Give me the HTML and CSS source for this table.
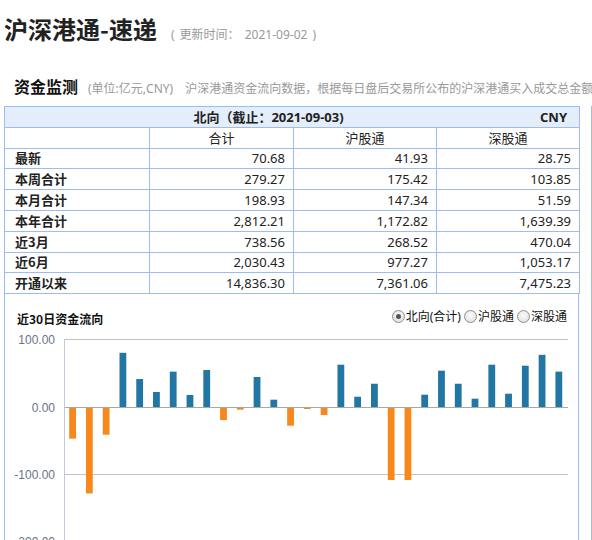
FILE: index.html
```html
<!DOCTYPE html>
<html lang="zh-CN">
<head>
<meta charset="utf-8">
<title>沪深港通-速递</title>
<link rel="stylesheet" href="styles.css">
</head>
<body>
<div class="page">
  <div class="top">
    <h1 class="title">沪深港通-速递</h1>
    <span class="updated">( 更新时间： 2021-09-02 )</span>
  </div>
  <div class="section-head">
    <span class="section-title">资金监测</span>
    <span class="unit">(单位:亿元,CNY)</span>
    <span class="desc">沪深港通资金流向数据，根据每日盘后交易所公布的沪深港通买入成交总金额和卖出成交总金额计算</span>
  </div>
  <div class="main">
    <div class="left">
      <table class="flow">
        <colgroup>
          <col class="c1"><col class="c2"><col class="c3"><col class="c4">
        </colgroup>
        <tr class="r-head">
          <td colspan="4">
            <div class="head-flex">
              <span class="head-title">北向（截止：2021-09-03)</span>
              <span class="head-cny">CNY</span>
            </div>
          </td>
        </tr>
        <tr class="r-cols">
          <td></td><td>合计</td><td>沪股通</td><td>深股通</td>
        </tr>
        <tr><td class="lbl">最新</td><td class="num">70.68</td><td class="num">41.93</td><td class="num">28.75</td></tr>
        <tr><td class="lbl">本周合计</td><td class="num">279.27</td><td class="num">175.42</td><td class="num">103.85</td></tr>
        <tr><td class="lbl">本月合计</td><td class="num">198.93</td><td class="num">147.34</td><td class="num">51.59</td></tr>
        <tr><td class="lbl">本年合计</td><td class="num">2,812.21</td><td class="num">1,172.82</td><td class="num">1,639.39</td></tr>
        <tr><td class="lbl">近3月</td><td class="num">738.56</td><td class="num">268.52</td><td class="num">470.04</td></tr>
        <tr><td class="lbl">近6月</td><td class="num">2,030.43</td><td class="num">977.27</td><td class="num">1,053.17</td></tr>
        <tr><td class="lbl">开通以来</td><td class="num">14,836.30</td><td class="num">7,361.06</td><td class="num">7,475.23</td></tr>
      </table>
      <div class="chart-panel">
        <div class="chart-head">
          <span class="chart-title">近30日资金流向</span>
          <div class="radios">
            <span class="radio checked"></span><span class="rlabel">北向(合计)</span>
            <span class="radio"></span><span class="rlabel">沪股通</span>
            <span class="radio"></span><span class="rlabel">深股通</span>
          </div>
        </div>
        <svg class="chart" width="573" height="215" viewBox="0 0 573 215">
          <g class="ylabels">
            <text x="50" y="14">100.00</text>
            <text x="50" y="82">0.00</text>
            <text x="50" y="149">-100.00</text>
            <text x="50" y="216">-200.00</text>
          </g>
          <line class="axis" x1="59.5" y1="9" x2="59.5" y2="215"/>
          <line class="grid" x1="60" y1="9.5" x2="563" y2="9.5"/>
          <line class="grid" x1="60" y1="144.5" x2="563" y2="144.5"/>
          <line class="grid" x1="60" y1="211.5" x2="563" y2="211.5"/>
          <g id="bars"></g>
          <line class="zero" x1="60" y1="77.5" x2="563" y2="77.5"/>
        </svg>
      </div>
    </div>
    <div class="right"></div>
  </div>
</div>
<script src="chart.js"></script>
</body>
</html>
```

FILE: chart.js
```js
(function () {
  var vals = [-46.6, -128, -40.7, 81, 42, 22.7, 53, 18.3, 55.4, -18.9,
    -3.5, 45, 11.3, -27.3, -2.5, -11.4, 63.3, 15.7, 35, -108,
    -108, 18.7, 54.4, 35, 12.8, 63.3, 20.2, 61.8, 78, 53];
  var g = document.getElementById('bars');
  var ns = 'http://www.w3.org/2000/svg';
  var x0 = 60, band = (563 - 60) / 30, zero = 77.3, k = 0.673;
  vals.forEach(function (v, i) {
    var r = document.createElementNS(ns, 'rect');
    var h = Math.abs(v) * k;
    var x = x0 + i * band + 4.2;
    r.setAttribute('x', x.toFixed(2));
    r.setAttribute('width', '6.8');
    r.setAttribute('y', (v >= 0 ? zero - h : zero).toFixed(2));
    r.setAttribute('height', h.toFixed(2));
    r.setAttribute('class', v >= 0 ? 'pos' : 'neg');
    g.appendChild(r);
  });
})();
```

FILE: styles.css
```css
html, body {
  margin: 0;
  padding: 0;
  background: #fff;
}
body {
  font-family: "Noto Sans", "Noto Sans CJK SC", sans-serif;
  color: #222;
  overflow: hidden;
}
.page {
  width: 592px;
}
.top {
  height: 58px;
  display: flex;
  align-items: baseline;
  padding-left: 4px;
  box-sizing: border-box;
  padding-top: 14px;
}
.title {
  margin: 0;
  font-size: 24px;
  line-height: 30px;
  font-weight: bold;
  color: #222;
  font-family: "Noto Sans CJK SC", sans-serif;
}
.updated {
  margin-left: 14px;
  font-size: 12px;
  color: #999;
  word-spacing: 2px;
}
.section-head {
  height: 48px;
  box-sizing: border-box;
  padding: 18px 0 0 14px;
  line-height: 20px;
  white-space: nowrap;
  display: flex;
  align-items: baseline;
}
.section-title {
  font-family: "Noto Sans CJK SC", sans-serif;
  font-size: 16px;
  font-weight: bold;
  color: #111;
}
.unit {
  margin-left: 10px;
  font-size: 12px;
  color: #999;
}
.desc {
  margin-left: 12px;
  font-size: 12px;
  color: #999;
  font-family: "Noto Sans CJK SC", sans-serif;
}
.main {
  display: flex;
  padding-left: 4px;
}
.left {
  width: 575px;
  flex: none;
}
.right {
  margin-left: 12px;
  border-left: 1px solid #9dbcf3;
  height: 440px;
  flex: 1;
}
.flow {
  width: 575px;
  table-layout: fixed;
  border-collapse: collapse;
  font-size: 13px;
}
.c1 { width: 145px; }
.c2 { width: 144px; }
.c3 { width: 143px; }
.c4 { width: 143px; }
.flow td {
  border: 1px solid #9dbcf3;
  height: 20.8px;
  padding: 0;
  line-height: 18px;
  box-sizing: border-box;
}
.r-head td {
  background: #e4eefb;
  font-weight: bold;
}
.head-flex {
  display: flex;
}
.head-title {
  flex: 1;
  text-align: center;
}
.head-cny {
  padding-right: 12px;
  padding-left: 8px;
}
.r-cols td {
  text-align: center;
}
.flow td.lbl {
  font-weight: bold;
  padding-left: 10px;
  font-family: "Noto Sans CJK SC", sans-serif;
}
.flow td.num {
  text-align: right;
  padding-right: 8px;
}
.chart-panel {
  border-left: 1px solid #9dbcf3;
  border-right: 1px solid #9dbcf3;
  height: 260px;
  box-sizing: border-box;
}
.chart-head {
  height: 36px;
  box-sizing: border-box;
  padding: 13px 11px 0 12px;
  display: flex;
  justify-content: space-between;
  align-items: center;
}
.chart-title {
  font-family: "Noto Sans CJK SC", sans-serif;
  font-size: 12px;
  font-weight: bold;
  line-height: 20px;
  color: #111;
}
.radios {
  display: flex;
  align-items: center;
  font-size: 12px;
  line-height: 16px;
  margin-top: -4px;
  color: #111;
}
.radio {
  width: 11px;
  height: 11px;
  border: 1px solid #8f8f8f;
  border-radius: 50%;
  background: radial-gradient(circle at 50% 40%, #fcfcfc 0, #e4e4e4 70%, #d0d0d0 100%);
  margin-left: 3px;
  position: relative;
  flex: none;
}
.radio:first-child {
  margin-left: 0;
}
.radio.checked::after {
  content: "";
  position: absolute;
  left: 3px;
  top: 3px;
  width: 5px;
  height: 5px;
  border-radius: 50%;
  background: #555;
}
.rlabel {
  margin-left: 1px;
}
.chart {
  display: block;
}
.ylabels text {
  font-family: "Liberation Sans", sans-serif;
  font-size: 12px;
  fill: #6a7387;
  text-anchor: end;
}
.axis {
  stroke: #c2cbdb;
  stroke-width: 1;
}
.grid {
  stroke: #c4c4c4;
  stroke-width: 1;
}
.zero {
  stroke: #a8a8a8;
  stroke-width: 1;
}
.pos {
  fill: #2276a3;
}
.neg {
  fill: #f7891c;
}
```
